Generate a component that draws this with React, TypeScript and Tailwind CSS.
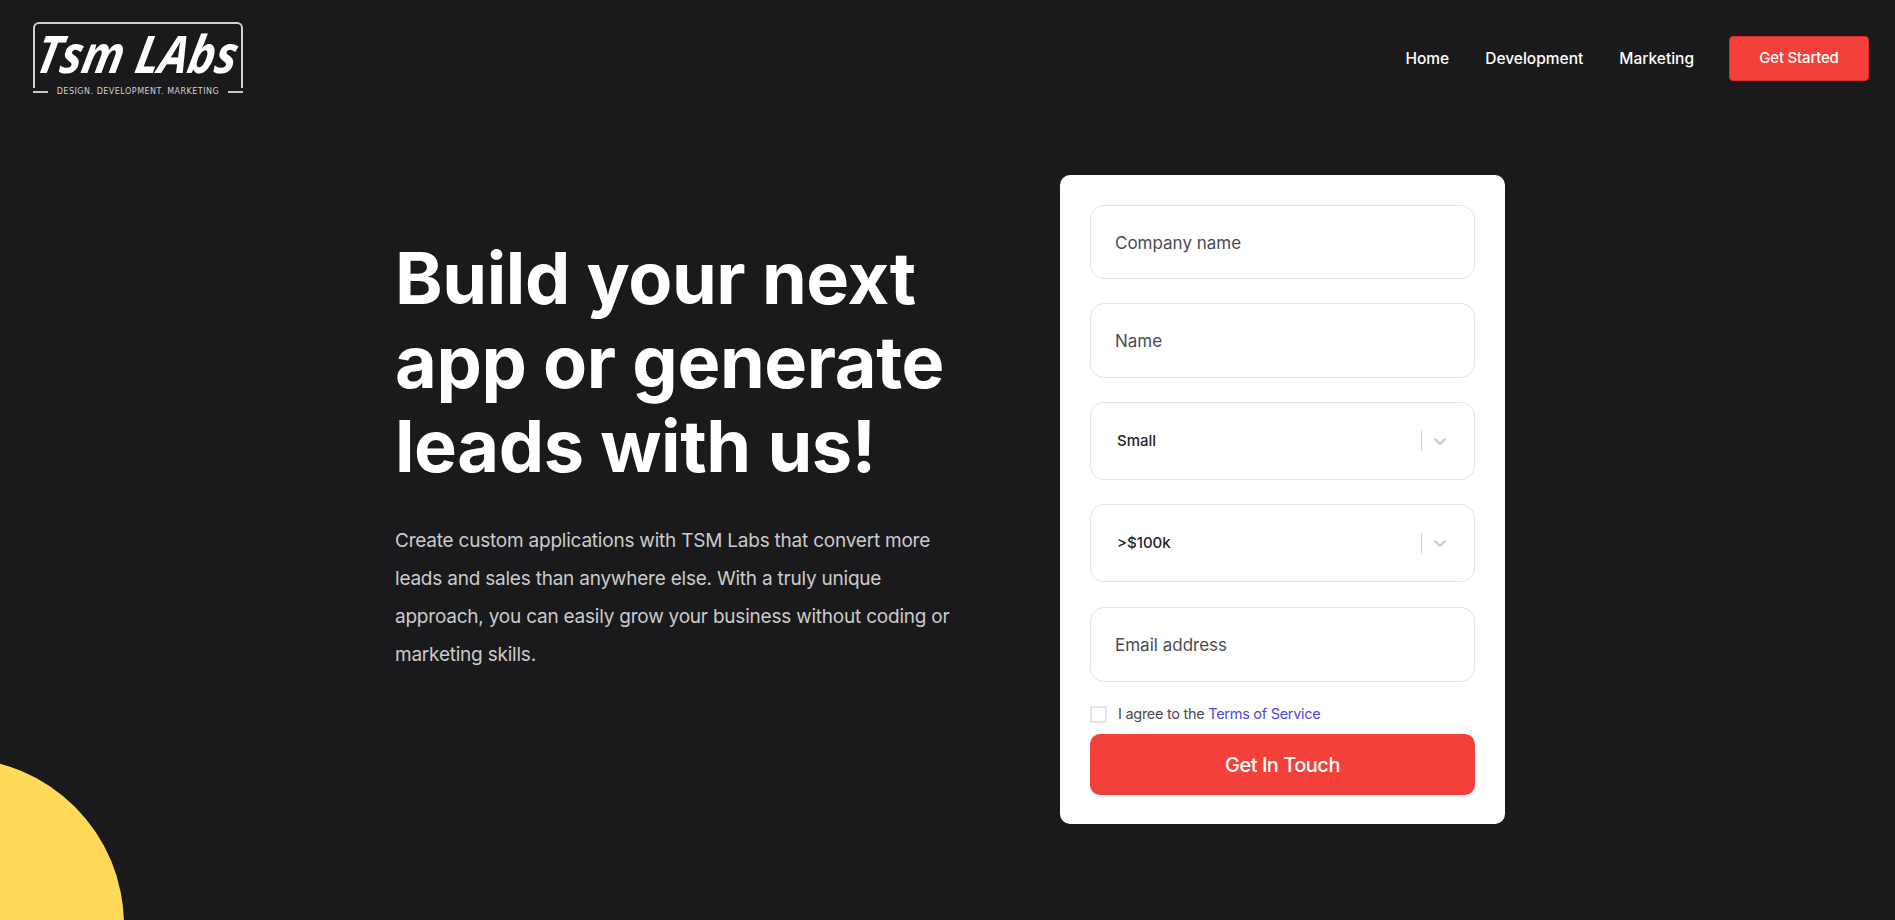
const font = "font-['Inter','Liberation_Sans',sans-serif]";

// react-select style dropdown field
const SelectField = ({ value, height }: { value: string; height: string }) => {
  return (
    <div className={`flex items-center justify-between border border-[#e4e4e4] rounded-[14px] bg-white pl-[26px] pr-[24px] ${height}`}>
      <span className="text-[15px] font-medium text-[#26262b]">{value}</span>
      <div className="flex items-center">
        <span className="w-px h-[20px] bg-[#cccccc] mr-[8px]" />
        <svg viewBox="0 0 20 20" className="w-[20px] h-[20px] fill-[#cccccc]">
          <path d="M4.516 7.548c0.436-0.446 1.043-0.481 1.576 0l3.908 3.747 3.908-3.747c0.533-0.481 1.141-0.446 1.574 0 0.436 0.445 0.408 1.197 0 1.615-0.406 0.418-4.695 4.502-4.695 4.502-0.217 0.223-0.502 0.335-0.787 0.335s-0.57-0.112-0.789-0.335c0 0-4.287-4.084-4.695-4.502s-0.436-1.17 0-1.615z" />
        </svg>
      </div>
    </div>
  );
};

const TextField = ({ placeholder, height }: { placeholder: string; height: string }) => {
  return (
    <input
      type="text"
      placeholder={placeholder}
      className={`w-full border border-[#e4e4e4] rounded-[14px] bg-white px-[24px] pt-[1px] text-[17px] placeholder:text-[#4b4b55] ${height}`}
    />
  );
};

const Logo = () => {
  return (
    <div className="w-[210px] h-[74px] flex flex-col">
      <div className="h-[69px] border-t-2 border-x-2 border-[#d0d0d0] rounded-t-[6px] flex items-center justify-center pb-[6px]">
        <span className="font-['Open_Sans',sans-serif] italic font-bold text-[52px] leading-none text-white -skew-x-12 scale-x-[0.88] whitespace-nowrap">Tsm LAbs</span>
      </div>
      <div className="flex items-center justify-between">
        <span className="w-[15px] h-[2px] bg-[#c8c8c8]" />
        <span className="font-['DejaVu_Sans',sans-serif] text-[8px] leading-none tracking-[0.5px] text-[#d0d0d0] whitespace-nowrap">DESIGN. DEVELOPMENT. MARKETING</span>
        <span className="w-[15px] h-[2px] bg-[#c8c8c8]" />
      </div>
    </div>
  );
};

export default function App() {
  return (
    <div className={`relative h-[920px] overflow-hidden bg-[#1a1a1c] ${font}`}>
      {/* yellow circle bottom left */}
      <div className="absolute left-[-210px] top-[758px] w-[334px] h-[334px] rounded-full bg-[#ffd95a]" />

      <header className="relative flex items-start justify-between pl-[33px] pr-[26px] pt-[22px]">
        <Logo />
        <nav className="flex items-center mt-[14px]">
          <a className="text-[15.5px] font-medium text-white mr-[36px] pt-[1px]">Home</a>
          <a className="text-[15.5px] font-medium text-white mr-[36px] pt-[1px]">Development</a>
          <a className="text-[15.5px] font-medium text-white mr-[35px] pt-[1px]">Marketing</a>
          <button className="w-[140px] h-[45px] rounded-[4px] bg-[#f4403b] border border-[#d92d28] text-[15px] font-medium tracking-[-0.2px] text-white">
            Get Started
          </button>
        </nav>
      </header>

      <main className="relative flex items-start pl-[395px] pt-[79px]">
        <div className="w-[665px] pt-[61px]">
          <h1 className="text-[72px] leading-[84px] font-bold text-white tracking-[-0.4px]">
            Build your next
            <br />
            app or generate
            <br />
            leads with us!
          </h1>
          <p className="mt-[34px] text-[19px] leading-[38px] text-[#cbcbcb] tracking-[-0.22px] w-[580px]">
            Create custom applications with TSM Labs that convert more
            <br />
            leads and sales than anywhere else. With a truly unique
            <br />
            approach, you can easily grow your business without coding or
            <br />
            marketing skills.
          </p>
        </div>

        <form className="w-[445px] h-[649px] rounded-[10px] bg-white px-[30px] pt-[30px] flex flex-col">
          <TextField placeholder="Company name" height="h-[74px]" />
          <div className="mt-[24px]">
            <TextField placeholder="Name" height="h-[75px]" />
          </div>
          <div className="mt-[24px]">
            <SelectField value="Small" height="h-[78px]" />
          </div>
          <div className="mt-[24px]">
            <SelectField value=">$100k" height="h-[78px]" />
          </div>
          <div className="mt-[25px]">
            <TextField placeholder="Email address" height="h-[75px]" />
          </div>
          <label className="flex items-center mt-[23px] h-[18px]">
            <span className="w-[17px] h-[17px] border-2 border-[#e3e3e8] rounded-[2px] mr-[11px]" />
            <span className="text-[14.5px] tracking-[-0.28px] text-[#4b4b55]">
              I agree to the <a className="text-[#4f46e5]">Terms of Service</a>
            </span>
          </label>
          <button className="mt-[11px] h-[61px] rounded-[10px] bg-[#f4403b] text-[20px] font-medium tracking-[-0.5px] text-white">
            Get In Touch
          </button>
        </form>
      </main>
    </div>
  );
}
